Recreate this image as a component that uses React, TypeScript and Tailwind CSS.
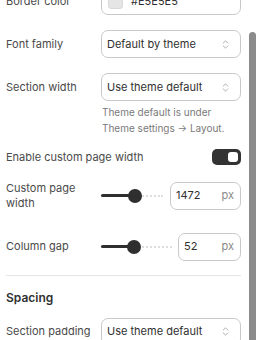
import { ChevronsUpDown } from 'lucide-react';

function Select({ value }: { value: string }) {
  return (
    <div className="flex h-[28px] w-[140px] items-center justify-between rounded-[7px] border border-[#c9c9c9] bg-white pl-[5px] pr-[9px]">
      <span className="text-[11px] text-[#303030]">{value}</span>
      <ChevronsUpDown className="h-[11px] w-[11px] text-[#8a8a8a]" strokeWidth={1.5} />
    </div>
  );
}

function Slider({ fill, track }: { fill: number; track: number }) {
  return (
    <div className="relative flex h-[28px] items-center" style={{ width: track }}>
      <div className="h-[3px] rounded-full bg-[#2f2f2f]" style={{ width: fill }} />
      <div className="h-[2px] flex-1 border-t-2 border-dotted border-[#dddddd]" />
      <div
        className="absolute top-1/2 h-[14px] w-[14px] -translate-x-1/2 -translate-y-1/2 rounded-full bg-[#2f2f2f]"
        style={{ left: fill }}
      />
    </div>
  );
}

function NumberBox({ value, width }: { value: string; width: number }) {
  return (
    <div
      className="flex h-[28px] items-center justify-between rounded-[7px] border border-[#c9c9c9] bg-white pl-[5px] pr-[6px]"
      style={{ width }}
    >
      <span className="text-[11px] text-[#303030]">{value}</span>
      <span className="text-[11px] text-[#8a8a8a]">px</span>
    </div>
  );
}

export default function App() {
  return (
    <div className="relative h-[340px] w-[256px] overflow-hidden bg-white font-['Inter',sans-serif]">
      <div className="absolute right-0 top-[32px] h-[320px] w-[7px] rounded-t-[4px] bg-[#8b8b8b]" />

      <div className="-mt-[13px] w-[241px] pl-[6px]">
        <div className="flex items-center">
          <span className="w-[95px] text-[11px] text-[#4a4a4a]">Border color</span>
          <div className="flex h-[28px] w-[140px] items-center gap-[8px] rounded-[7px] border border-[#c9c9c9] bg-white pl-[6px]">
            <div className="h-[15px] w-[15px] rounded-[3px] border border-[#dadada] bg-[#e5e5e5]" />
            <span className="text-[11px] text-[#303030]">#E5E5E5</span>
          </div>
        </div>

        <div className="mt-[15px] flex items-center">
          <span className="w-[95px] text-[11px] text-[#4a4a4a]">Font family</span>
          <Select value="Default by theme" />
        </div>

        <div className="mt-[15px] flex items-start">
          <span className="flex h-[28px] w-[95px] items-center text-[11px] text-[#4a4a4a]">Section width</span>
          <div>
            <Select value="Use theme default" />
            <p className="mt-[3px] pl-[1px] text-[10px] leading-[16px] text-[#7a7a7a]">
              Theme default is under
              <br />
              Theme settings → Layout.
            </p>
          </div>
        </div>

        <div className="mt-[13px] flex items-center justify-between">
          <span className="text-[11px] text-[#4a4a4a]">Enable custom page width</span>
          <div className="flex h-[16px] w-[29px] items-center justify-end rounded-[5px] bg-[#333333] pr-[3px]">
            <div className="h-[10px] w-[10px] rounded-[3px] bg-white" />
          </div>
        </div>

        <div className="mt-[15px] flex items-center">
          <span className="w-[95px] text-[11px] leading-[15px] text-[#4a4a4a]">
            Custom page
            <br />
            width
          </span>
          <Slider fill={34} track={62} />
          <div className="ml-[7px]">
            <NumberBox value="1472" width={71} />
          </div>
        </div>

        <div className="mt-[22px] flex items-center">
          <span className="w-[95px] text-[11px] text-[#4a4a4a]">Column gap</span>
          <Slider fill={33} track={71} />
          <div className="ml-[6px]">
            <NumberBox value="52" width={63} />
          </div>
        </div>

        <div className="mt-[14px] h-px bg-[#e6e6e6]" />

        <div className="mt-[13px] text-[12px] font-semibold text-[#303030]">Spacing</div>

        <div className="mt-[11px] flex items-center">
          <span className="w-[95px] text-[11px] text-[#4a4a4a]">Section padding</span>
          <Select value="Use theme default" />
        </div>
      </div>
    </div>
  );
}
